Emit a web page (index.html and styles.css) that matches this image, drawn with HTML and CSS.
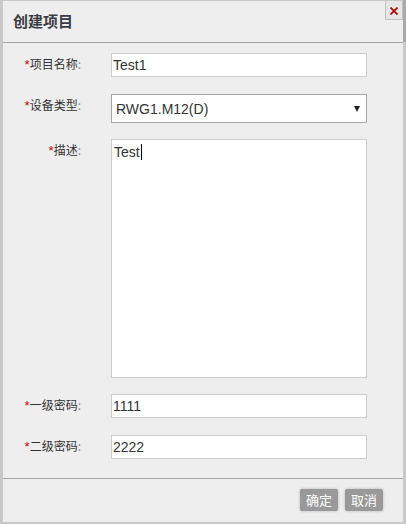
FILE: index.html
```html
<!DOCTYPE html>
<html>
<head>
<meta charset="utf-8">
<link rel="stylesheet" href="styles.css">
</head>
<body>
<div class="dialog">
  <div class="dlg-head">
    <h1 class="dlg-title">创建项目</h1>
    <button class="dlg-close" type="button" aria-label="关闭">
      <svg width="8" height="8" viewBox="0 0 8 8"><path d="M0.5 0.5 L7.5 7.5 M7.5 0.5 L0.5 7.5" stroke="#b30000" stroke-width="1.7" fill="none"/></svg>
    </button>
  </div>
  <form class="dlg-body">
    <div class="row">
      <label class="lbl"><span class="req">*</span>项目名称<span class="colon">:</span></label>
      <input class="ctl" type="text" value="Test1">
    </div>
    <div class="row row-gap1">
      <label class="lbl"><span class="req">*</span>设备类型<span class="colon">:</span></label>
      <div class="sel-wrap">
        <select class="sel"><option>RWG1.M12(D)</option></select>
      </div>
    </div>
    <div class="row">
      <label class="lbl"><span class="req">*</span>描述<span class="colon">:</span></label>
      <div class="area">Test<span class="caret"></span></div>
    </div>
    <div class="row">
      <label class="lbl"><span class="req">*</span>一级密码<span class="colon">:</span></label>
      <input class="ctl" type="text" value="1111">
    </div>
    <div class="row row-gap1">
      <label class="lbl"><span class="req">*</span>二级密码<span class="colon">:</span></label>
      <input class="ctl" type="text" value="2222">
    </div>
  </form>
  <div class="dlg-foot">
    <button class="btn" type="button">确定</button>
    <button class="btn" type="button">取消</button>
  </div>
</div>
</body>
</html>
```

FILE: styles.css
```css
html {
  background: linear-gradient(#a9a9a9, #a9a9a9) right top / 3px 42px no-repeat, #c8c8c8;
}
body {
  margin: 0;
  padding: 1px 3px 2px 3px;
  font-family: "Noto Sans CJK SC", sans-serif;
}
.dialog {
  width: 400px;
  height: 521px;
  background: #eeeeee;
  display: flex;
  flex-direction: column;
}
.dlg-head {
  height: 41px;
  border-bottom: 1px solid #a3a3a3;
  display: flex;
  justify-content: space-between;
  align-items: flex-start;
}
.dlg-title {
  margin: 0;
  padding: 10px 0 0 10px;
  font-size: 15px;
  line-height: 20px;
  font-weight: bold;
  color: #3b3b45;
}
.dlg-close {
  width: 18px;
  height: 19px;
  margin: 0;
  padding: 0;
  border: 1px solid #c2c2c2;
  border-top: none;
  background: #e6e6e6;
  display: flex;
  align-items: center;
  justify-content: center;
}
.dlg-close svg { display: block; margin-top: 1px; }
.dlg-body {
  flex: 1;
  margin: 0;
  padding: 10px 0 0 0;
  display: flex;
  flex-direction: column;
  gap: 16px;
}
.row {
  display: grid;
  grid-template-columns: 79px 256px;
  column-gap: 29px;
  align-items: start;
}
.row-gap1 { margin-top: 1px; }
.lbl {
  text-align: right;
  font-size: 12px;
  line-height: 22px;
  color: #333;
  padding-right: 1px;
}
.req { color: #cc0000; font-family: "Liberation Sans", sans-serif; font-size: 13px; }
.colon { color: #8a8a8a; }
.ctl {
  box-sizing: border-box;
  width: 256px;
  height: 24px;
  margin: 0;
  padding: 0 1px;
  border: 1px solid #cccccc;
  background: #fff;
  font-family: "Liberation Sans", Arial, sans-serif;
  font-size: 14px;
  color: #333;
  outline: none;
}
.sel-wrap {
  position: relative;
  width: 256px;
  height: 29px;
}
.sel {
  box-sizing: border-box;
  width: 256px;
  height: 29px;
  margin: 0;
  padding: 0 0 0 4px;
  border: 1px solid #a6a6a6;
  border-radius: 0;
  background: #fff;
  -webkit-appearance: none;
  appearance: none;
  font-family: "Liberation Sans", Arial, sans-serif;
  font-size: 14px;
  color: #333;
}
.sel-wrap::after {
  content: "";
  position: absolute;
  right: 7px;
  top: 12px;
  border-left: 3.5px solid transparent;
  border-right: 3.5px solid transparent;
  border-top: 6px solid #222;
  pointer-events: none;
}
.area {
  box-sizing: border-box;
  width: 256px;
  height: 239px;
  border: 1px solid #cccccc;
  background: #fff;
  padding: 4px 2px;
  font-family: "Liberation Sans", Arial, sans-serif;
  font-size: 14px;
  line-height: 17px;
  color: #333;
}
.caret {
  display: inline-block;
  width: 1px;
  height: 16px;
  background: #000;
  vertical-align: -3px;
  margin-left: 1px;
}
.dlg-foot {
  box-sizing: border-box;
  height: 44px;
  border-top: 1px solid #a3a3a3;
  display: flex;
  justify-content: flex-end;
  align-items: flex-start;
  gap: 7px;
  padding: 10px 20px 0 0;
}
.btn {
  height: 22px;
  margin: 0;
  padding: 0 6px;
  border: none;
  border-radius: 2px;
  background: #999999;
  color: #fff;
  font-family: "Noto Sans CJK SC", sans-serif;
  font-size: 13px;
  line-height: 22px;
  box-shadow: 0 0 3px rgba(0,0,0,0.25);
}
```
